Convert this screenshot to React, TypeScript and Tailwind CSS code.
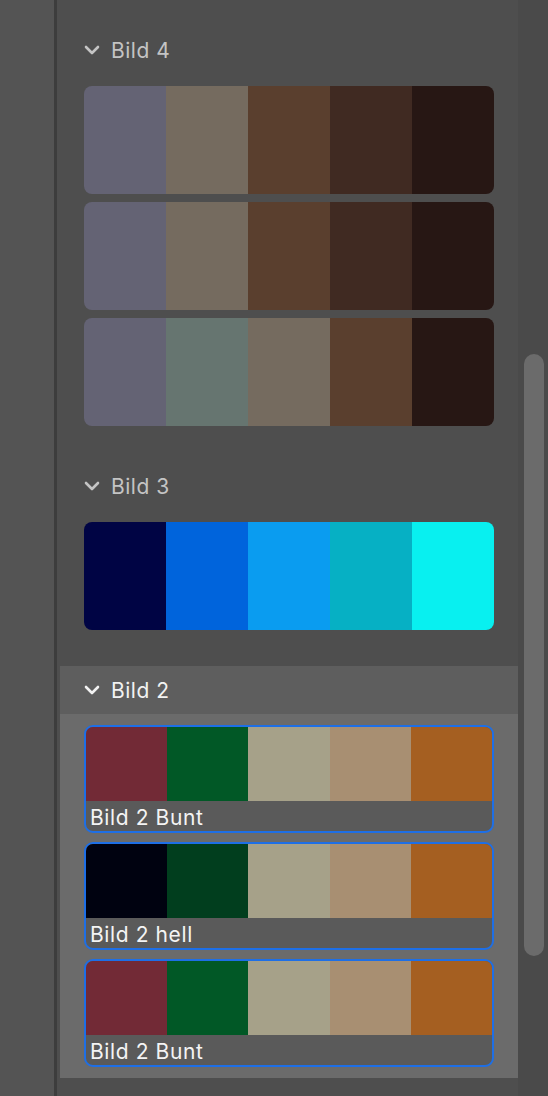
const FONT = "font-['Inter','Liberation_Sans',sans-serif]";

type Palette = { colors: string[]; name?: string };

const groups: { title: string; selected?: boolean; palettes: Palette[] }[] = [
  {
    title: "Bild 4",
    palettes: [
      { colors: ["#646374", "#756b5f", "#5a3f2e", "#402a22", "#271714"] },
      { colors: ["#646374", "#756b5f", "#5a3f2e", "#402a22", "#271714"] },
      { colors: ["#646374", "#667570", "#756b5f", "#5a3f2e", "#271714"] },
    ],
  },
  {
    title: "Bild 3",
    palettes: [{ colors: ["#000444", "#0064dc", "#0a9cf0", "#06b0c4", "#08f0f0"] }],
  },
  {
    title: "Bild 2",
    selected: true,
    palettes: [
      { name: "Bild 2 Bunt", colors: ["#722a36", "#015826", "#a6a189", "#a88f72", "#a55f21"] },
      { name: "Bild 2 hell", colors: ["#000210", "#013e1e", "#a6a189", "#a88f72", "#a55f21"] },
      { name: "Bild 2 Bunt", colors: ["#722a36", "#015826", "#a6a189", "#a88f72", "#a55f21"] },
    ],
  },
];

function Chevron({ light }: { light?: boolean }) {
  return (
    <svg width="16" height="10" viewBox="0 0 16 10" className={light ? "text-[#f2f2f2]" : "text-[#c4c4c4]"}>
      <path d="M2 2 L8 8 L14 2" fill="none" stroke="currentColor" strokeWidth="2.6" strokeLinecap="round" strokeLinejoin="round" />
    </svg>
  );
}

function Swatches({ colors, className }: { colors: string[]; className: string }) {
  return (
    <div className={`flex ${className}`}>
      {colors.map((c, i) => (
        <div key={i} className="flex-1" style={{ background: c }} />
      ))}
    </div>
  );
}

export default function App() {
  return (
    <div className={`flex h-[1096px] w-[548px] overflow-hidden bg-[#4e4e4e] ${FONT}`}>
      <div className="w-[54px] bg-[#545454]" />
      <div className="w-[3px] bg-[#3d3d3d]" />

      <main className="flex flex-1 flex-col gap-[24px] pl-[3px] pt-[26px]">
        {groups.map(g => (
          <section key={g.title} className={g.selected ? "bg-[#6b6b6b]" : ""}>
            <div
              className={`flex h-[48px] items-center gap-[11px] px-[24px] ${
                g.selected ? "bg-[#5e5e5e] text-[#f2f2f2]" : "text-[#c4c4c4]"
              }`}
            >
              <Chevron light={g.selected} />
              <span className="text-[21px] leading-none tracking-[0.5px]">{g.title}</span>
            </div>

            {g.selected ? (
              <div className="flex flex-col gap-[9px] px-[24px] py-[11px]">
                {g.palettes.map((p, i) => (
                  <div key={i} className="h-[108px] overflow-hidden rounded-[9px] border-2 border-[#1e6fe6] bg-[#5a5a5a]">
                    <Swatches colors={p.colors} className="h-[74px]" />
                    <div className="flex h-[30px] items-center px-[4px] pt-[3px] text-[21px] leading-none tracking-[0.6px] text-[#f4f4f4]">
                      {p.name}
                    </div>
                  </div>
                ))}
              </div>
            ) : (
              <div className="flex flex-col gap-[8px] px-[24px] py-[12px]">
                {g.palettes.map((p, i) => (
                  <Swatches key={i} colors={p.colors} className="h-[108px] overflow-hidden rounded-[8px]" />
                ))}
              </div>
            )}
          </section>
        ))}
      </main>

      <div className="flex w-[30px] flex-col bg-[#4a4a4a] pl-[6px] pr-[4px] pt-[354px]">
        <div className="h-[602px] rounded-full bg-[#6b6b6b]" />
      </div>
    </div>
  );
}
